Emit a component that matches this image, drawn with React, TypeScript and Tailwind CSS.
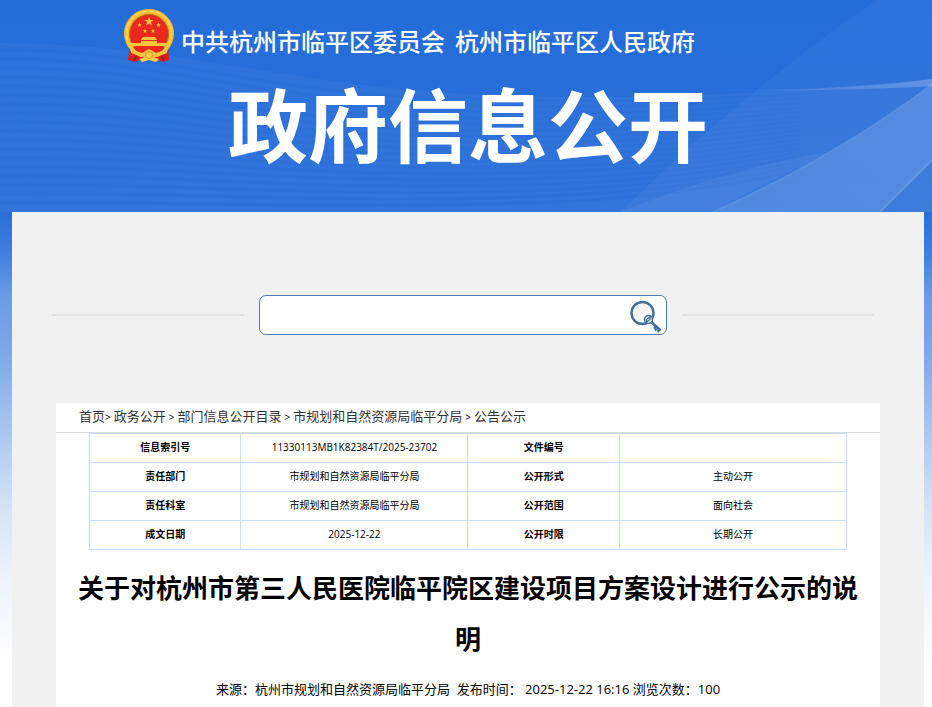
const sans =
  "font-['Open_Sans','Noto_Sans_CJK_SC',sans-serif]";

const crumbs = [
  "首页",
  "政务公开",
  "部门信息公开目录",
  "市规划和自然资源局临平分局",
  "公告公示",
];

const rows = [
  ["信息索引号", "11330113MB1K82384T/2025-23702", "文件编号", ""],
  ["责任部门", "市规划和自然资源局临平分局", "公开形式", "主动公开"],
  ["责任科室", "市规划和自然资源局临平分局", "公开范围", "面向社会"],
  ["成文日期", "2025-12-22", "公开时限", "长期公开"],
];

const waves = Array.from({ length: 18 }, (_, i) => i * 9);

const STAR =
  "M0 -5 L1.2 -1.6 4.8 -1.5 1.9 .6 2.9 4 0 2 -2.9 4 -1.9 .6 -4.8 -1.5 -1.2 -1.6Z";

function Backdrop() {
  return (
    <svg
      className="absolute inset-x-0 top-0 h-[707px] w-full"
      viewBox="0 0 932 707"
      preserveAspectRatio="none"
      aria-hidden="true"
    >
      <defs>
        <linearGradient id="sky" x1="0" y1="0" x2="0" y2="1">
          <stop offset="0" stopColor="#246cd9" />
          <stop offset=".3" stopColor="#2a70da" />
          <stop offset=".36" stopColor="#3f7fdf" />
          <stop offset=".42" stopColor="#6b9ce6" />
          <stop offset=".5" stopColor="#7ea8e8" />
          <stop offset=".6" stopColor="#a5c4ef" />
          <stop offset=".72" stopColor="#d5e4f6" />
          <stop offset=".82" stopColor="#eef4fc" />
          <stop offset=".95" stopColor="#ffffff" />
        </linearGradient>
        <linearGradient id="beam" x1="1" y1="0" x2="0" y2="1">
          <stop offset="0" stopColor="#fff" stopOpacity=".15" />
          <stop offset="1" stopColor="#fff" stopOpacity=".11" />
        </linearGradient>
        <linearGradient id="ridge" x1="0" y1="0" x2="1" y2="0">
          <stop offset="0" stopColor="#fff" stopOpacity="0" />
          <stop offset="1" stopColor="#fff" stopOpacity=".22" />
        </linearGradient>
      </defs>
      <rect width="932" height="707" fill="url(#sky)" />
      <path
        d="M0 43C160 43 270 80 440 92S800 92 932 79V212H0Z"
        fill="#fff"
        opacity=".04"
      />
      {waves.map((y) => (
        <path
          key={y}
          d={`M0 ${50 + y}C150 ${48 + y} 250 ${92 + y * 0.75} 430 ${98 + y * 0.7}S700 ${100 + y * 0.6} 800 ${94 + y * 0.5}`}
          fill="none"
          stroke="#1d62cd"
          strokeWidth="3"
          opacity=".14"
        />
      ))}
      <path d="M876 0H932V212H620Q740 95 876 0Z" fill="#fff" opacity=".04" />
      <path d="M620 212Q740 165 830 152L710 212Z" fill="#fff" opacity=".05" />
      <path d="M932 84V212H712Q830 160 932 84Z" fill="url(#beam)" />
      <path d="M932 84Q830 160 712 212" fill="none" stroke="#fff" strokeWidth="2" opacity=".08" />
      <path d="M932 160V212H880Z" fill="#1f66d2" opacity=".4" />
      <path d="M932 160L880 212" stroke="#fff" strokeWidth="2" opacity=".15" />
      <path d="M700 91Q850 90 932 79V86Q850 91 700 91Z" fill="url(#ridge)" />
    </svg>
  );
}

function Emblem() {
  return (
    <svg className="h-[54px] w-[52px] shrink-0" viewBox="0 0 52 54" role="img" aria-label="国徽">
      <path d="M7 36L5 51 12 53 19 50H33L40 53 46 51 45 36Z" fill="#dc1d18" />
      <path d="M7 42L14 46 11 52M45 42L38 46 41 52" fill="none" stroke="#a60f12" strokeWidth="1.5" />
      <ellipse cx="26" cy="24.5" rx="25" ry="24.5" fill="#f4b931" />
      <circle cx="26" cy="24.5" r="22.5" fill="none" stroke="#ffd452" strokeWidth="2" strokeDasharray="6 1" />
      <circle cx="26" cy="25" r="19.5" fill="#e92820" stroke="#b87414" />
      <g fill="#f5c63c">
        <path d={STAR} transform="translate(26 12.5)" />
        <path d={STAR} transform="translate(16.5 16) scale(.5)" />
        <path d={STAR} transform="translate(35.5 16) scale(.5)" />
        <path d={STAR} transform="translate(22 22) scale(.5)" />
        <path d={STAR} transform="translate(30 22) scale(.5)" />
        <path d="M20 28H32L34 31H18ZM18 32H34V34H46V37H6V34H18Z" />
      </g>
      <path d="M10 38H42Q38 46 26 46T10 38Z" fill="#e92820" />
      <path d="M6 35Q11 42 19 44L26 40 33 44Q41 42 46 35L44 44 34 48 26 46 18 48 8 44Z" fill="#f5c63c" />
      <path d="M16 50L26 47 36 50 33 53 26 51 19 53Z" fill="#f9cf49" />
      <circle cx="26" cy="46" r="3.5" fill="#f9cf49" stroke="#d99820" />
    </svg>
  );
}

function SearchKeyIcon() {
  return (
    <svg className="block h-[36px] w-[34px]" viewBox="0 0 34 36" fill="none" aria-hidden="true">
      <circle cx="13.5" cy="16" r="11" fill="#f4f4f4" stroke="#41709a" strokeWidth="2.4" />
      <circle cx="19.5" cy="22.5" r="4" fill="#e8eef4" stroke="#41709a" strokeWidth="1.5" />
      <path d="M17.5 25V22.5L21 20V22.5Z" stroke="#41709a" strokeWidth="1.2" />
      <path d="M22 25L31 33" stroke="#41709a" strokeWidth="2.8" />
      <path d="M25 31.5L28 28.5M28.5 35L31.5 32M26 32L27.5 33.5" stroke="#41709a" strokeWidth="2.4" />
    </svg>
  );
}

export default function App() {
  return (
    <div className={`relative min-h-screen text-black ${sans}`}>
      <Backdrop />

      <div className="relative">
        <header className="h-[212px] text-white">
          <div className="ml-[123px] flex items-center gap-[6px] pt-[9px]">
            <Emblem />
            <p className="flex gap-[10px] pt-3 text-[24px] leading-[30px] font-medium whitespace-nowrap">
              <span>中共杭州市临平区委员会</span>
              <span>杭州市临平区人民政府</span>
            </p>
          </div>
          <p className="pt-[18px] pl-1 text-center text-[80px] leading-[88px] font-bold whitespace-nowrap">
            政府信息公开
          </p>
        </header>

        <main className="mr-2 ml-3 bg-[#f1f1f1]">
          <form
            className="flex items-center gap-[15px] pt-[83px] pr-[50px] pb-[68px] pl-10"
            onSubmit={(e) => e.preventDefault()}
          >
            <span className="h-[2px] flex-1 bg-[#e2e2e2]" />
            <div className="flex h-10 w-[408px] items-center rounded-[7px] border border-[#4a7fb5] bg-white pr-[3px]">
              <input
                type="text"
                aria-label="搜索"
                className="h-full min-w-0 flex-1 bg-transparent px-3 text-sm outline-none"
              />
              <button type="submit" aria-label="搜索">
                <SearchKeyIcon />
              </button>
            </div>
            <span className="h-[2px] flex-1 bg-[#e2e2e2]" />
          </form>

          <div className="mx-11 bg-white pb-2">
            <nav
              aria-label="当前位置"
              className="flex h-[30px] items-center border-b border-[#d9d9d9] pb-[2px] pl-[23px] text-[13px] whitespace-nowrap text-[#333]"
            >
              {crumbs.map((name, i) => (
                <span key={name} className="flex items-center">
                  {i > 0 && (
                    <span className={`pt-[2px] pr-[3px] text-[10px] text-black ${i > 1 ? "pl-[3px]" : ""}`}>
                      &gt;
                    </span>
                  )}
                  <a href="#">{name}</a>
                </span>
              ))}
            </nav>

            <table className="mx-auto w-[92%] table-fixed border-collapse text-center text-[10px] leading-[14px]">
              <colgroup>
                <col className="w-1/5" />
                <col className="w-3/10" />
                <col className="w-1/5" />
                <col className="w-3/10" />
              </colgroup>
              <tbody>
                {rows.map((row) => (
                  <tr key={row[0]} className="h-[29px]">
                    {row.map((cell, i) =>
                      i % 2 === 0 ? (
                        <th key={i} scope="row" className="border border-[#c6deff] pb-[2px] font-bold">
                          {cell}
                        </th>
                      ) : (
                        <td key={i} className="border border-[#c6deff] pb-[2px]">
                          {cell}
                        </td>
                      )
                    )}
                  </tr>
                ))}
              </tbody>
            </table>

            <h1 className="px-4 pt-[13px] text-center text-[26px] leading-[51px] font-bold">
              关于对杭州市第三人民医院临平院区建设项目方案设计进行公示的说明
            </h1>

            <p className="flex justify-center pt-[14px] text-[13px] leading-[20px] whitespace-pre">
              <span>来源：杭州市规划和自然资源局临平分局  </span>
              <span>发布时间： 2025-12-22 16:16 </span>
              <span>浏览次数：100</span>
            </p>
          </div>
        </main>
      </div>
    </div>
  );
}
